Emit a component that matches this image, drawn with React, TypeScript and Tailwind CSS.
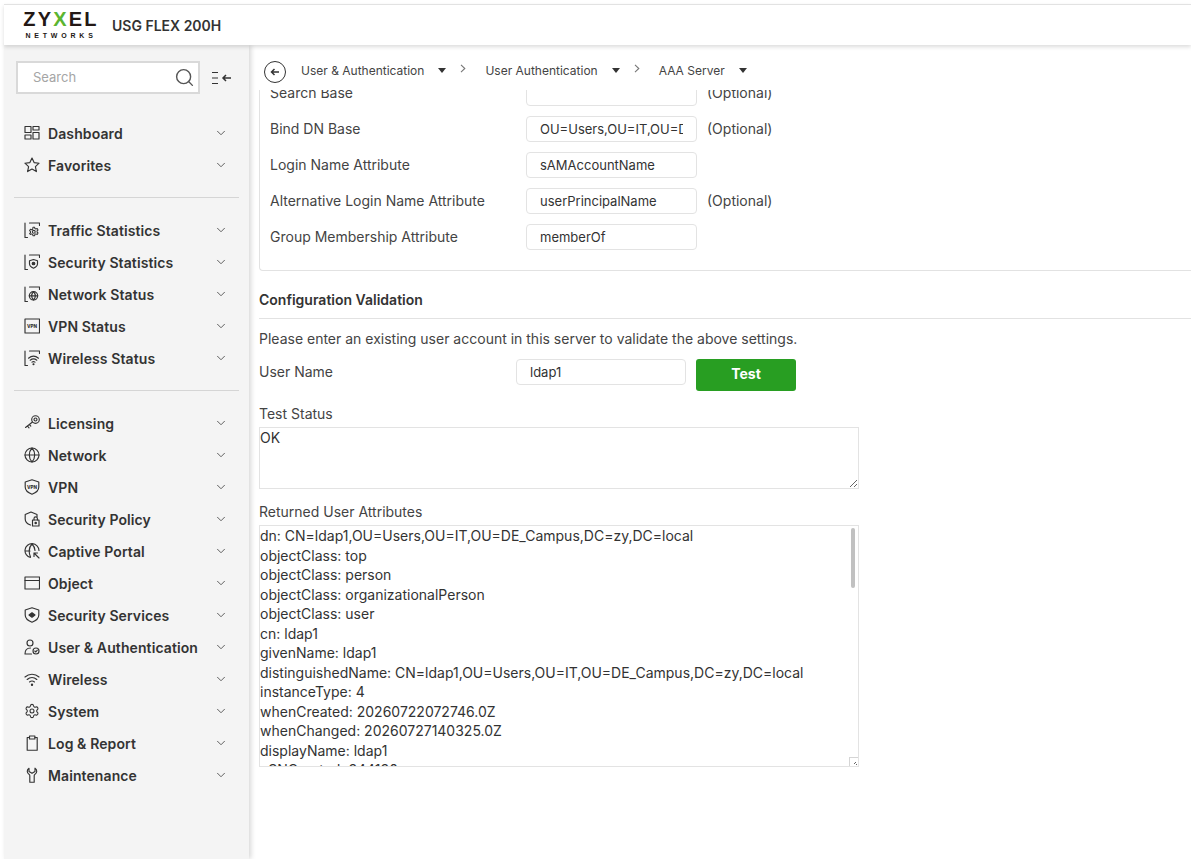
import { ChevronDown, Search, Settings } from "lucide-react";
import type { ReactNode } from "react";

const s = { fill: "none", stroke: "currentColor", strokeWidth: 1.15, strokeLinecap: "round", strokeLinejoin: "round" } as const;

function Ico({ children }: { children: ReactNode }) {
  return (
    <svg viewBox="0 0 16 16" className="h-4 w-4 shrink-0 text-[#333]" {...s}>
      {children}
    </svg>
  );
}

const gear = "M6.7 1h2.6l.4 2 1.5.8 2-.8 1.3 2.3-1.5 1.4v1.6l1.5 1.4-1.3 2.3-2-.8-1.5.8-.4 2H6.7l-.4-2-1.5-.8-2 .8L1.5 10.7 3 9.3V7.7L1.5 6.3 2.8 4l2 .8 1.5-.8z";

// frame used by the "status" group: corner brackets with a small glyph inside
const Frame = () => <path d="M5.5 1H15.5V3.5M1 5V15.5H3.5M1 5V1" />;

const TinyVpn = ({ y }: { y: number }) => (
  <text x="8" y={y} textAnchor="middle" fontSize="4.6" fontWeight="800" fontFamily="Inter, sans-serif" fill="currentColor" stroke="none">
    VPN
  </text>
);

const icons: Record<string, ReactNode> = {
  Dashboard: <Ico><rect x="1" y="1.5" width="6" height="6" /><rect x="9" y="1.5" width="6" height="3.5" /><rect x="1" y="10" width="6" height="4" /><rect x="9" y="7.5" width="6" height="6.5" /></Ico>,
  Favorites: <Ico><path d="M8 1l2.1 4.6 5 .6-3.7 3.4 1 5L8 12.1l-4.4 2.5 1-5L.9 6.2l5-.6z" /></Ico>,
  "Traffic Statistics": <Ico><Frame /><g transform="translate(4.6 4.6) scale(.65)" strokeWidth="1.6"><path d={gear} /><circle cx="8" cy="8" r="2.2" /></g></Ico>,
  "Security Statistics": <Ico><Frame /><path d="M9.5 5.5l4 1.3v3c0 2.3-2 3.6-4 4.4-2-.8-4-2.1-4-4.4v-3z" /><circle cx="9.5" cy="9.5" r="1.3" fill="currentColor" /></Ico>,
  "Network Status": <Ico><Frame /><circle cx="9.5" cy="9.8" r="4.2" /><path d="M5.3 9.8h8.4M9.5 5.6c-2.3 2.6-2.3 5.8 0 8.4M9.5 5.6c2.3 2.6 2.3 5.8 0 8.4" /></Ico>,
  "VPN Status": <Ico><rect x="1" y="1" width="14.5" height="14" /><TinyVpn y={9.7} /></Ico>,
  "Wireless Status": <Ico><Frame /><path d="M4.5 8.2c3-2.6 7-2.6 10 0M6.2 10.2c2-1.6 4.6-1.6 6.6 0M8 12.1c1-.7 2-.7 3 0" /><circle cx="9.5" cy="14.2" r=".5" fill="currentColor" /></Ico>,
  Licensing: <Ico><circle cx="11.5" cy="4.5" r="3.8" /><circle cx="11.5" cy="4.5" r="1.5" /><path d="M8.5 7L1.5 12.5M3.5 11l1.5 1.8M5.5 9.5l1.3 1.6" /></Ico>,
  Network: <Ico><circle cx="8" cy="8" r="7" /><path d="M1 8h14M8 1c-3.6 4-3.6 10 0 14M8 1c3.6 4 3.6 10 0 14" /></Ico>,
  VPN: <Ico><path d="M8 .8l6.8 2.2v5c0 3.6-3.2 5.9-6.8 7.2C4.4 13.9 1.2 11.6 1.2 8V3z" /><TinyVpn y={9.5} /></Ico>,
  "Security Policy": <Ico><path d="M6.5 14C3.500 13 1.2 11 1.2 8V3.500L7 1l6 2.500v2" /><rect x="8.5" y="9" width="6.5" height="6" /><path d="M10 9V7.5a1.7 1.7 0 013.4 0V9" /><circle cx="11.7" cy="12" r=".7" fill="currentColor" /></Ico>,
  "Captive Portal": <Ico><path d="M6.5 14.5A7 7 0 1115 7.5M1 8h5M8 1c-2.8 2.8-3.5 8-1.5 13M8 1c1.8 1.8 2.8 4 3 6.5M10 10l5 5M10 10v3.5M10 10h3.5" /></Ico>,
  Object: <Ico><rect x="1" y="2" width="14.5" height="12" /><path d="M1 5.5h14.5" /></Ico>,
  "Security Services": <Ico><path d="M8 .8l6.8 2.2v5c0 3.6-3.2 5.9-6.8 7.2C4.4 13.9 1.2 11.6 1.2 8V3z" /><path d="M5 8l3-2.2L11 8l-3 2.2z" fill="currentColor" /></Ico>,
  "User & Authentication": <Ico><circle cx="6" cy="4" r="3" /><path d="M1 15c0-3.5 2-6 5.5-6M7.500 15H1" /><circle cx="12" cy="12" r="3" /><path d="M10.8 12l1 1 1.5-1.8" /></Ico>,
  Wireless: <Ico><path d="M1 6c4-3.7 10-3.7 14 0M3.2 8.5c2.8-2.5 6.8-2.5 9.6 0M5.5 11c1.5-1.2 3.5-1.2 5 0" /><circle cx="8" cy="13.7" r=".6" fill="currentColor" /></Ico>,
  System: <Settings className="h-4 w-4 shrink-0 text-[#333]" strokeWidth={1.6} />,
  "Log & Report": <Ico><path d="M5.5 2.5H3.2v12.7h10V2.5h-2.3" /><rect x="5.5" y="1" width="5.4" height="3" /></Ico>,
  Maintenance: <Ico><path d="M5 1.2C2.8 2.5 2.5 6 5.2 7.5c.5.3.6.6.6 1.2v6.500h4.400V8.700c0-.6.1-.9.6-1.200C13.500 6 13.200 2.500 11 1.200v3.300L8 6.300 5 4.500z" /></Ico>,
};

const groups = [
  ["Dashboard", "Favorites"],
  ["Traffic Statistics", "Security Statistics", "Network Status", "VPN Status", "Wireless Status"],
  ["Licensing", "Network", "VPN", "Security Policy", "Captive Portal", "Object", "Security Services", "User & Authentication", "Wireless", "System", "Log & Report", "Maintenance"],
];

const attributes = [
  "dn: CN=ldap1,OU=Users,OU=IT,OU=DE_Campus,DC=zy,DC=local",
  "objectClass: top",
  "objectClass: person",
  "objectClass: organizationalPerson",
  "objectClass: user",
  "cn: ldap1",
  "givenName: ldap1",
  "distinguishedName: CN=ldap1,OU=Users,OU=IT,OU=DE_Campus,DC=zy,DC=local",
  "instanceType: 4",
  "whenCreated: 20260722072746.0Z",
  "whenChanged: 20260727140325.0Z",
  "displayName: ldap1",
  "uSNCreated: 344130",
];

function NavItem({ label }: { label: string }) {
  return (
    <div className="flex h-8 items-center pl-[20px] pr-[21px]">
      {icons[label]}
      <span className="ml-2 flex-1 text-[14px] font-semibold tracking-[0.1px] text-[#333]">{label}</span>
      <ChevronDown className="h-[14px] w-[14px] text-[#555]" strokeWidth={1.6} />
    </div>
  );
}

function Sidebar() {
  return (
    <aside className="w-[245px] shrink-0 bg-[#f4f4f4] shadow-[2px_0_5px_rgba(0,0,0,0.16)]">
      <div className="flex items-center pl-[12px] pt-[16px]">
        <div className="flex h-[33px] w-[184px] items-center justify-between border-2 border-[#d9d9d9] bg-white pl-[15px] pr-[3px]">
          <span className="text-[13px] text-[#a5a5a5]">Search</span>
          <Search className="h-[21px] w-[21px] text-[#555]" strokeWidth={1.6} />
        </div>
        <svg viewBox="0 0 22 16" className="ml-[11px] h-4 w-[22px] text-[#333]" fill="none" stroke="currentColor" strokeWidth="1.2">
          <path d="M1 2.5h6M1 8h6M1 13.5h6" />
          <path d="M20 8h-8M15 5l-3 3 3 3" strokeWidth="1.5" />
        </svg>
      </div>
      <div className="pt-[23px]">
        {groups.map((g, i) => (
          <div key={i}>
            {i > 0 && <div className="mx-[10px] my-[16px] border-t border-[#d5d5d5]" />}
            {g.map((label) => (
              <NavItem key={label} label={label} />
            ))}
          </div>
        ))}
      </div>
    </aside>
  );
}

function Crumb({ label, last }: { label: string; last?: boolean }) {
  return (
    <div className="flex items-center">
      <span className="text-[12px] text-[#444]">{label}</span>
      <span className="ml-[14px] h-0 w-0 border-x-[4px] border-t-[5px] border-x-transparent border-t-[#333]" />
      {!last && (
        <svg viewBox="0 0 6 9" className="mb-[4px] ml-[14px] mr-[19px] h-[9px] w-[6px]" fill="none" stroke="#777" strokeWidth="1.1">
          <path d="M1 .8L4.8 4.500 1 8.200" />
        </svg>
      )}
    </div>
  );
}

function FormRow({ label, value, optional }: { label: string; value: string; optional?: boolean }) {
  return (
    <div className="flex h-9 items-center pl-[10px]">
      <span className="w-[256px] pb-[2px] text-[14px] text-[#444]">{label}</span>
      <div className="h-[26px] w-[171px] rounded-[4px] border border-[#e3e3e3] bg-white px-[13px] text-[13px] leading-[24px] text-[#333]">
        <div className="overflow-hidden whitespace-nowrap">{value}</div>
      </div>
      {optional && <span className="ml-[10px] pb-[2px] text-[14px] text-[#444]">(Optional)</span>}
    </div>
  );
}

export default function App() {
  return (
    <div className="flex h-[859px] w-[1191px] flex-col overflow-hidden bg-white pt-[4px] pl-[4px] font-['Inter',sans-serif]">
      <header className="relative z-10 flex h-[41px] shrink-0 items-center border-t border-[#e2e2e2] bg-white pl-[20px] shadow-[0_2px_4px_rgba(0,0,0,0.14)]">
        <div className="flex w-[74px] flex-col items-center leading-none text-[#231815]">
          <span className="font-['Liberation_Sans',sans-serif] text-[20px] leading-[17px] font-bold tracking-[2.2px]">
            ZY<span className="text-[#5bb531]">X</span>EL
          </span>
          <span className="mt-[4px] font-['Liberation_Sans',sans-serif] text-[7px] leading-[8px] font-bold tracking-[3.8px]">NETWORKS</span>
        </div>
        <span className="ml-[14px] text-[14px] font-semibold text-[#333]">USG FLEX 200H</span>
      </header>
      <div className="flex min-h-0 flex-1">
        <Sidebar />
        <main className="flex min-w-0 flex-1 flex-col">
          <nav className="flex h-[45px] shrink-0 items-center pt-[8px] pl-[15px]">
            <span className="flex h-[22px] w-[22px] items-center justify-center rounded-full border border-[#333]">
              <svg viewBox="0 0 12 12" className="h-3 w-3" fill="none" stroke="#333" strokeWidth="1.5"><path d="M10 6H2.5M5.5 3L2.500 6l3 3" /></svg>
            </span>
            <div className="mb-[2px] ml-[15px] flex items-center">
              <Crumb label="User & Authentication" />
              <Crumb label="User Authentication" />
              <Crumb label="AAA Server" last />
            </div>
          </nav>
          <div className="min-h-0 flex-1 overflow-hidden pl-[10px]">
            <div className="-mt-[15px] rounded-bl-[4px] border-b border-l border-[#e2e2e2] pb-[15px]">
              <FormRow label="Search Base" value="" optional />
              <FormRow label="Bind DN Base" value="OU=Users,OU=IT,OU=DE_Campus,DC=zy,DC=local" optional />
              <FormRow label="Login Name Attribute" value="sAMAccountName" />
              <FormRow label="Alternative Login Name Attribute" value="userPrincipalName" optional />
              <FormRow label="Group Membership Attribute" value="memberOf" />
            </div>
            <h2 className="mt-[19px] text-[14px] leading-[20px] font-semibold text-[#333]">Configuration Validation</h2>
            <div className="mt-[8px] border-t border-[#e2e2e2] pt-[10px] text-[14px] leading-[20px] text-[#444]">
              Please enter an existing user account in this server to validate the above settings.
            </div>
            <div className="mt-[10px] flex items-start">
              <span className="w-[257px] pt-[2px] text-[14px] leading-[22px] text-[#444]">User Name</span>
              <div className="h-[26px] w-[170px] rounded-[4px] border border-[#e3e3e3] bg-white px-[13px] text-[13px] leading-[24px] text-[#333]">ldap1</div>
              <button className="ml-[10px] h-[32px] w-[100px] rounded-[3px] bg-[#289e22] pb-[4px] text-[14px] font-bold text-white">Test</button>
            </div>
            <div className="mt-[13px] text-[14px] leading-[20px] text-[#444]">Test Status</div>
            <textarea
              readOnly
              value="OK"
              className="mt-[3px] block h-[62px] w-[600px] border border-[#e3e3e3] text-[14px] leading-[19.5px] text-[#333] outline-none"
            />
            <div className="mt-[13px] text-[14px] leading-[20px] text-[#444]">Returned User Attributes</div>
            <div className="relative mt-[3px] h-[242px] w-[600px] overflow-hidden border border-[#e3e3e3] text-[14px] leading-[19.5px] text-[#333]">
              {attributes.map((line) => (
                <div key={line}>{line}</div>
              ))}
              <span className="absolute top-[2px] right-[3px] h-[60px] w-[4px] rounded-full bg-[#c1c1c1]" />
              <span className="absolute right-0 bottom-0 flex h-[9px] w-[9px] items-end justify-end border-t border-l border-[#d5d5d5] bg-white">
                <svg viewBox="0 0 8 8" className="h-2 w-2" stroke="#666" strokeWidth="1"><path d="M6 4L4 6M7 6L6 7" /></svg>
              </span>
            </div>
          </div>
        </main>
      </div>
    </div>
  );
}
